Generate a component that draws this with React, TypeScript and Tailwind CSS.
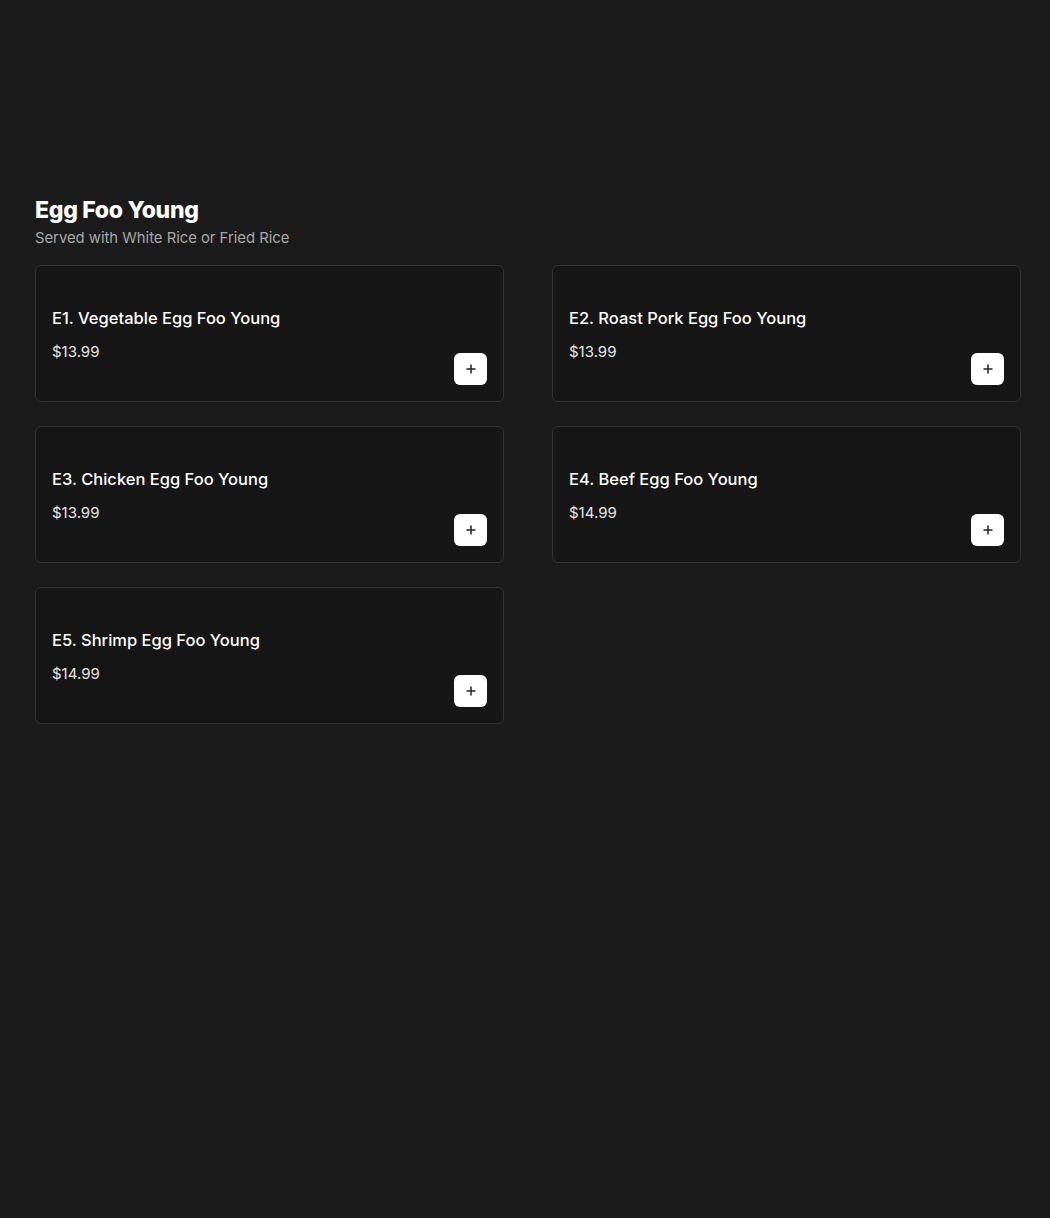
import React from 'react';

type Item = { code: string; name: string; price: string };

const ITEMS: Item[] = [
  { code: 'E1.', name: 'Vegetable Egg Foo Young', price: '$13.99' },
  { code: 'E2.', name: 'Roast Pork Egg Foo Young', price: '$13.99' },
  { code: 'E3.', name: 'Chicken Egg Foo Young', price: '$13.99' },
  { code: 'E4.', name: 'Beef Egg Foo Young', price: '$14.99' },
  { code: 'E5.', name: 'Shrimp Egg Foo Young', price: '$14.99' },
];

// ─── ItemCard ────────────────────────────────────────────────────────────────
const ItemCard: React.FC<{ item: Item }> = ({ item }) => (
  <div className="h-[137px] rounded-md border border-[#323232] bg-[#161616] pl-4 pr-4 flex flex-col">
    <div className="mt-[40px] text-[16.5px] leading-6 font-medium text-white">
      {item.code} {item.name}
    </div>
    <div className="mt-[10px] flex justify-between items-start">
      <span className="text-[15px] leading-6 text-[#e6e6e6]">{item.price}</span>
      <button className="mt-[13px] w-[33px] h-8 rounded-md bg-white flex items-center justify-center">
        <svg width="10" height="10" viewBox="0 0 10 10" fill="none">
          <path d="M5 0.5v9M0.5 5h9" stroke="#222" strokeWidth="1.5" />
        </svg>
      </button>
    </div>
  </div>
);

export default function App() {
  return (
    <div
      className="min-h-[1218px] bg-[#1b1b1b] px-[35px] pt-[196px]"
      style={{ fontFamily: 'Inter, "Noto Sans", sans-serif' }}
    >
      <h2 className="text-[23px] leading-7 font-extrabold text-white tracking-[-0.3px]">Egg Foo Young</h2>
      <p className="mt-1 text-[14.8px] leading-5 text-[#a8a8a8]">Served with White Rice or Fried Rice</p>

      <div className="mt-[17px] grid grid-cols-2 gap-x-12 gap-y-6 w-[986px]">
        {ITEMS.map(it => (
          <ItemCard key={it.code} item={it} />
        ))}
      </div>
    </div>
  );
}
